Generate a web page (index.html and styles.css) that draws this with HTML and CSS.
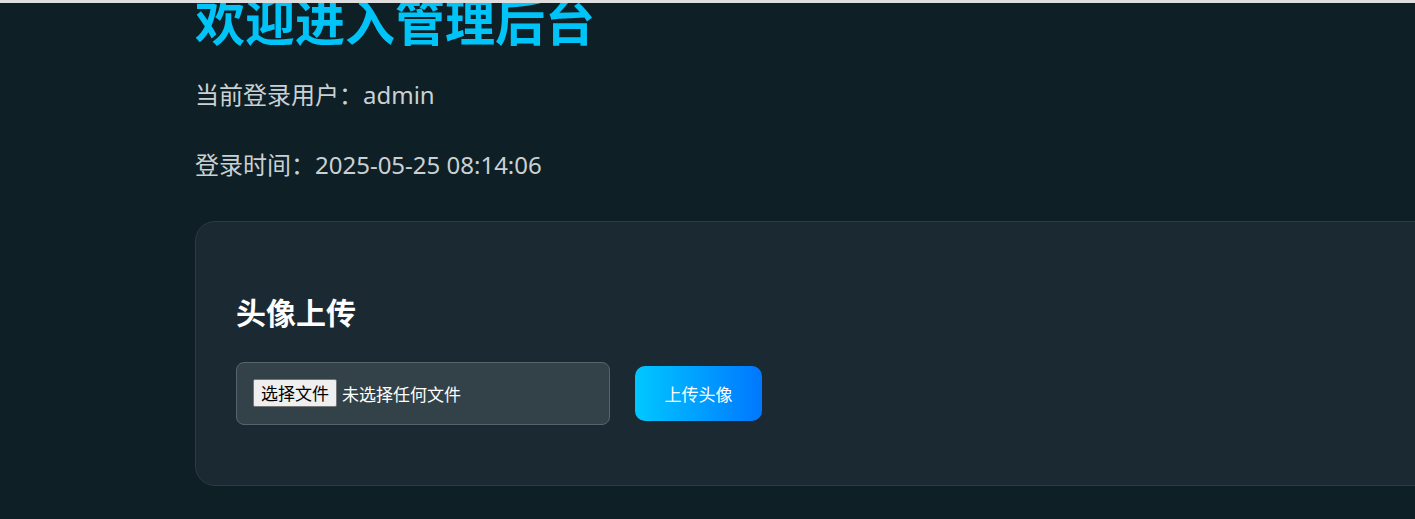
FILE: index.html
```html
<!DOCTYPE html>
<html lang="zh-CN">

<head>
    <meta charset="UTF-8">
    <meta name="viewport" content="width=device-width, initial-scale=1.0">
    <link rel="stylesheet" href="styles.css">
</head>

<body>
    <div class="top-strip"></div>

    <div class="page">
        <h1 class="title">欢迎进入管理后台</h1>
        <p class="info">当前登录用户：admin</p>
        <p class="info">登录时间：2025-05-25 08:14:06</p>

        <div class="card">
            <h3>头像上传</h3>
            <form class="upload-row">
                <div class="file-box">
                    <input type="file" id="avatar" class="file-hidden" accept="image/*">
                    <label for="avatar" class="file-btn">选择文件</label>
                    <span class="file-name">未选择任何文件</span>
                </div>
                <button type="button" class="upload-btn">上传头像</button>
            </form>
        </div>
    </div>
</body>

</html>
```

FILE: styles.css
```css
/* Page base */
html,
body {
    margin: 0;
    height: 100%;
    overflow: hidden;
}

body {
    background: #0f1f26;
    color: #c9d1d5;
    font-family: "Noto Sans", "Noto Sans CJK SC", sans-serif;
}

/* Thin light strip on top */
.top-strip {
    height: 3px;
    background: #dedede;
}

/* Content column */
.page {
    padding-left: 195px;
    overflow: hidden;
}

.title {
    margin: -14px 0 0 0;
    font-size: 50px;
    line-height: 1.2;
    font-weight: bold;
    color: #00c3f7;
    font-family: "Noto Sans CJK SC", sans-serif;
}

.info {
    font-size: 24px;
    margin: 27px 0 0 0;
    line-height: 1.6;
}

.info + .info {
    margin-top: 32px;
}

/* Upload card */
.card {
    width: 1400px;
    margin-top: 36px;
    padding: 67px 40px 60px 40px;
    background: #1b2a32;
    border: 1px solid #2c3a41;
    border-radius: 20px;
    box-sizing: border-box;
}

.card h3 {
    margin: 0 0 29px 0;
    font-size: 30px;
    font-weight: bold;
    color: #ffffff;
    font-family: "Noto Sans CJK SC", sans-serif;
}

.upload-row {
    display: flex;
    align-items: center;
    gap: 25px;
}

.file-box {
    width: 374px;
    height: 63px;
    box-sizing: border-box;
    padding: 0 16px;
    display: flex;
    align-items: center;
    gap: 5px;
    background: #334249;
    border: 1px solid #58646b;
    border-radius: 8px;
    font-family: "Noto Sans CJK SC", sans-serif;
    font-size: 17px;
}

.file-hidden {
    display: none;
}

/* Looks like the browser's own file button */
.file-btn {
    padding: 0 7px;
    height: 28px;
    line-height: 26px;
    box-sizing: border-box;
    background: #efefef;
    color: #000000;
    border: 1px solid #767676;
    border-radius: 2px;
    cursor: pointer;
}

.file-name {
    color: #ffffff;
}

.upload-btn {
    width: 127px;
    height: 55px;
    border: none;
    border-radius: 10px;
    background: linear-gradient(90deg, #00c8ff, #0077ff);
    color: #ffffff;
    font-size: 17px;
    font-family: "Noto Sans CJK SC", sans-serif;
    cursor: pointer;
}
```
